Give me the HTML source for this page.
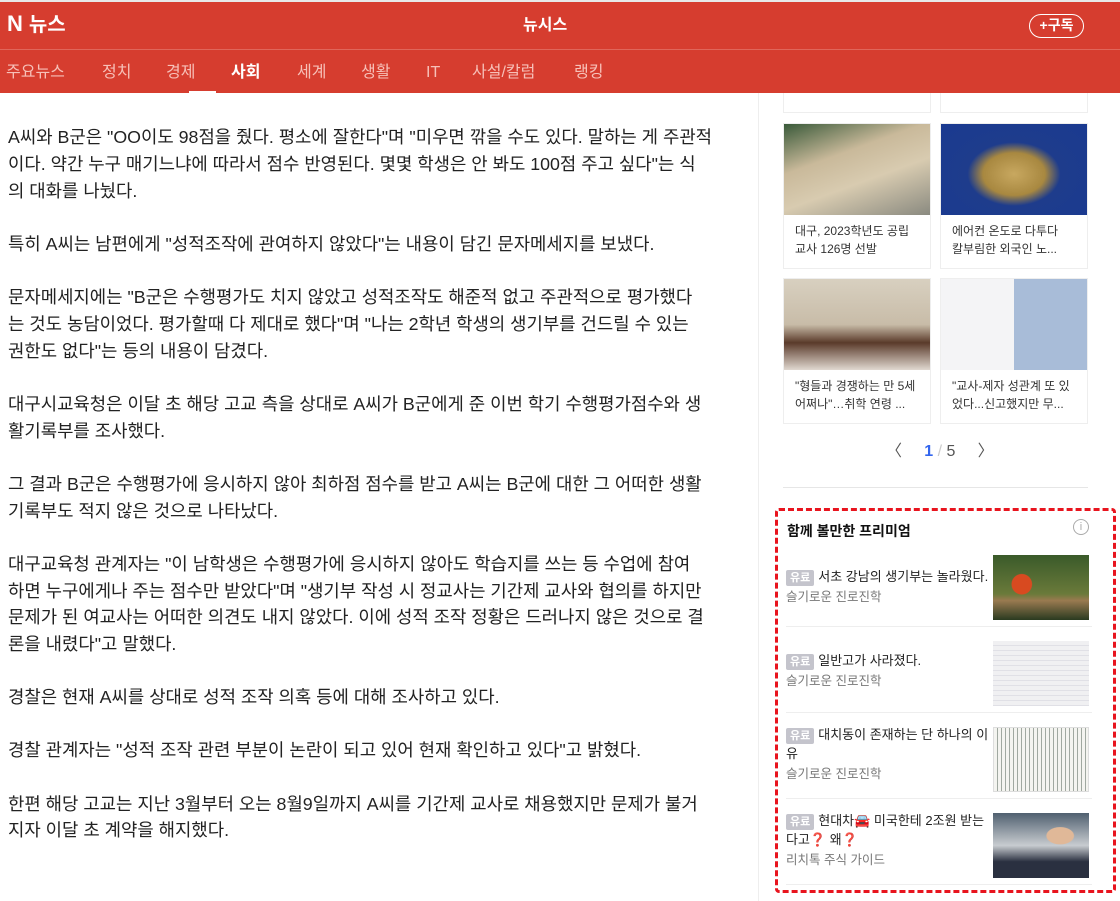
<!DOCTYPE html>
<html><head><meta charset="utf-8">
<style>
*{margin:0;padding:0;box-sizing:border-box}
body{width:1120px;height:901px;overflow:hidden;background:#fff;font-family:"Liberation Sans","Noto Sans CJK KR",sans-serif;position:relative;color:#222}
.hdr{position:absolute;left:0;top:0;width:1120px;height:93px;background:#d63d2f;border-top:2px solid #e8e8e8;z-index:5}
.hline{position:absolute;left:0;top:47px;width:1120px;height:1px;background:#e0665a}
.logo{position:absolute;left:7px;top:9px;color:#fff;font-weight:bold;font-size:20px;line-height:26px}
.logo b{font-size:22px;margin-right:6px;font-family:"Liberation Sans",sans-serif}
.press{position:absolute;left:523px;top:14px;color:#fff;font-weight:bold;font-size:16px;line-height:20px}
.sub{position:absolute;left:1029px;top:12px;width:55px;height:24px;border:1.5px solid #fff;border-radius:12px;color:#fff;font-size:14px;font-weight:bold;text-align:center;line-height:21px}
.nav span{position:absolute;top:61px;color:#f7c0b8;font-size:16px;line-height:20px}
.nav .on{color:#fff;font-weight:bold}
.uline{position:absolute;left:189px;top:89px;width:27px;height:3px;background:#fff}
.art{position:absolute;left:8px;top:124px;font-size:17.8px;line-height:26.8px;color:#222}
.art p{margin-bottom:26.4px;white-space:nowrap}
.vdiv{position:absolute;left:758px;top:93px;width:1px;height:808px;background:#eee}
.card{position:absolute;width:148px;border:1px solid #eee;background:#fff}
.card .img{height:91px}
.card .t{font-size:12px;line-height:18px;color:#333;padding:7px 6px 0 11px;height:53px;overflow:hidden;white-space:nowrap}
.pager{position:absolute;top:437px;left:886px;font-size:16px;color:#555}
.prem{position:absolute;left:775px;top:508px;width:341px;height:385px;border:3px dashed #e8141e;border-radius:4px}
.prem h3{position:absolute;left:9px;top:10px;font-size:14px;color:#111}
.info{position:absolute;left:295px;top:8px;width:16px;height:16px;border:1px solid #aaa;border-radius:50%;color:#aaa;font-size:11px;text-align:center;line-height:14px}
.it{position:absolute;left:8px;width:306px;height:86px;border-bottom:1px solid #eee}
.it .tt{position:absolute;left:0;top:18px;width:205px;font-size:13px;line-height:19px;color:#222}
.it .src{font-size:12.5px;color:#777;margin-top:2px}
.tag{display:inline-block;background:#c4c4cc;color:#fff;font-size:11px;font-weight:bold;padding:0 4px;line-height:16px;border-radius:2px;margin-right:4px}
.it .th{position:absolute;left:207px;top:14px;width:96px;height:65px}
</style></head><body>
<div class="hdr">
<div class="hline"></div>
<div class="logo"><b>N</b>뉴스</div>
<div class="press">뉴시스</div>
<div class="sub">+구독</div>
<div class="nav">
<span style="left:6px">주요뉴스</span><span style="left:102px">정치</span><span style="left:166px">경제</span><span class="on" style="left:231px">사회</span><span style="left:297px">세계</span><span style="left:361px">생활</span><span style="left:426px">IT</span><span style="left:472px">사설/칼럼</span><span style="left:574px">랭킹</span>
</div>
<div class="uline"></div>
</div>

<div class="art">
<p>A씨와 B군은 "OO이도 98점을 줬다. 평소에 잘한다"며 "미우면 깎을 수도 있다. 말하는 게 주관적<br>이다. 약간 누구 매기느냐에 따라서 점수 반영된다. 몇몇 학생은 안 봐도 100점 주고 싶다"는 식<br>의 대화를 나눴다.</p>
<p>특히 A씨는 남편에게 "성적조작에 관여하지 않았다"는 내용이 담긴 문자메세지를 보냈다.</p>
<p>문자메세지에는 "B군은 수행평가도 치지 않았고 성적조작도 해준적 없고 주관적으로 평가했다<br>는 것도 농담이었다. 평가할때 다 제대로 했다"며 "나는 2학년 학생의 생기부를 건드릴 수 있는<br>권한도 없다"는 등의 내용이 담겼다.</p>
<p>대구시교육청은 이달 초 해당 고교 측을 상대로 A씨가 B군에게 준 이번 학기 수행평가점수와 생<br>활기록부를 조사했다.</p>
<p>그 결과 B군은 수행평가에 응시하지 않아 최하점 점수를 받고 A씨는 B군에 대한 그 어떠한 생활<br>기록부도 적지 않은 것으로 나타났다.</p>
<p>대구교육청 관계자는 "이 남학생은 수행평가에 응시하지 않아도 학습지를 쓰는 등 수업에 참여<br>하면 누구에게나 주는 점수만 받았다"며 "생기부 작성 시 정교사는 기간제 교사와 협의를 하지만<br>문제가 된 여교사는 어떠한 의견도 내지 않았다. 이에 성적 조작 정황은 드러나지 않은 것으로 결<br>론을 내렸다"고 말했다.</p>
<p>경찰은 현재 A씨를 상대로 성적 조작 의혹 등에 대해 조사하고 있다.</p>
<p>경찰 관계자는 "성적 조작 관련 부분이 논란이 되고 있어 현재 확인하고 있다"고 밝혔다.</p>
<p>한편 해당 고교는 지난 3월부터 오는 8월9일까지 A씨를 기간제 교사로 채용했지만 문제가 불거<br>지자 이달 초 계약을 해지했다.</p>
</div>

<div class="vdiv"></div>

<div class="card" style="left:783px;top:80px;height:33px"></div>
<div class="card" style="left:940px;top:80px;height:33px"></div>
<div class="card" style="left:783px;top:123px"><div class="img" style="background:linear-gradient(160deg,#3a5a3a 0%,#c9b99a 35%,#d8cbb0 60%,#8a8a80 100%)"></div><div class="t">대구, 2023학년도 공립<br>교사 126명 선발</div></div>
<div class="card" style="left:940px;top:123px"><div class="img" style="background:radial-gradient(ellipse at 50% 55%,#c8a860 0%,#a88840 30%,#1e3c8c 45%,#1a3a90 100%)"></div><div class="t">에어컨 온도로 다투다<br>칼부림한 외국인 노...</div></div>
<div class="card" style="left:783px;top:278px"><div class="img" style="background:linear-gradient(180deg,#d8d0c0 0%,#c8bca8 50%,#5a3a2a 70%,#e0d8d0 100%)"></div><div class="t">"형들과 경쟁하는 만 5세<br>어쩌나"…취학 연령 ...</div></div>
<div class="card" style="left:940px;top:278px"><div class="img" style="background:linear-gradient(90deg,#f4f4f6 0%,#f4f4f6 50%,#a8bcd8 50%,#a8bcd8 100%)"></div><div class="t">"교사-제자 성관계 또 있<br>었다...신고했지만 무...</div></div>
<div class="pager">〈&nbsp;&nbsp;&nbsp;&nbsp;&nbsp;<span style="color:#3366ee;font-weight:bold">1</span><span style="color:#ccc"> / </span>5&nbsp;&nbsp;&nbsp;&nbsp;&nbsp;〉</div>
<div style="position:absolute;left:783px;top:487px;width:305px;height:1px;background:#e6e6e6"></div>

<div class="prem">
<h3>함께 볼만한 프리미엄</h3>
<div class="info">i</div>
<div class="it" style="top:30px"><div class="tt" style="top:26px"><span class="tag">유료</span>서초 강남의 생기부는 놀라웠다.<div class="src">슬기로운 진로진학</div></div><div class="th" style="background:radial-gradient(circle at 30% 45%,#d84a20 0 13%,transparent 14%),linear-gradient(180deg,#3a5a2a,#6a7a3a 60%,#9a7a50 70%,#2a3a20)"></div></div>
<div class="it" style="top:116px"><div class="tt" style="top:24px"><span class="tag">유료</span>일반고가 사라졌다.<div class="src">슬기로운 진로진학</div></div><div class="th" style="background:repeating-linear-gradient(180deg,#f0f0f2 0 4px,#e0e0e6 4px 5px)"></div></div>
<div class="it" style="top:202px"><div class="tt" style="top:12px"><span class="tag">유료</span>대치동이 존재하는 단 하나의 이<br>유<div class="src">슬기로운 진로진학</div></div><div class="th" style="background:repeating-linear-gradient(90deg,#f4f4f0 0 3px,#a0a8a0 3px 4px);border:1px solid #ddd"></div></div>
<div class="it" style="top:288px"><div class="tt" style="top:12px"><span class="tag">유료</span>현대차🚘 미국한테 2조원 받는<br>다고<span style="color:#e02020">❓</span> 왜<span style="color:#e02020">❓</span><div class="src">리치톡 주식 가이드</div></div><div class="th" style="background:radial-gradient(ellipse at 70% 35%,#e0b898 0 14%,transparent 15%),linear-gradient(180deg,#506070 0%,#c8ccd0 50%,#2a3040 75%,#2a3040 100%)"></div></div>
</div>
</body></html>
